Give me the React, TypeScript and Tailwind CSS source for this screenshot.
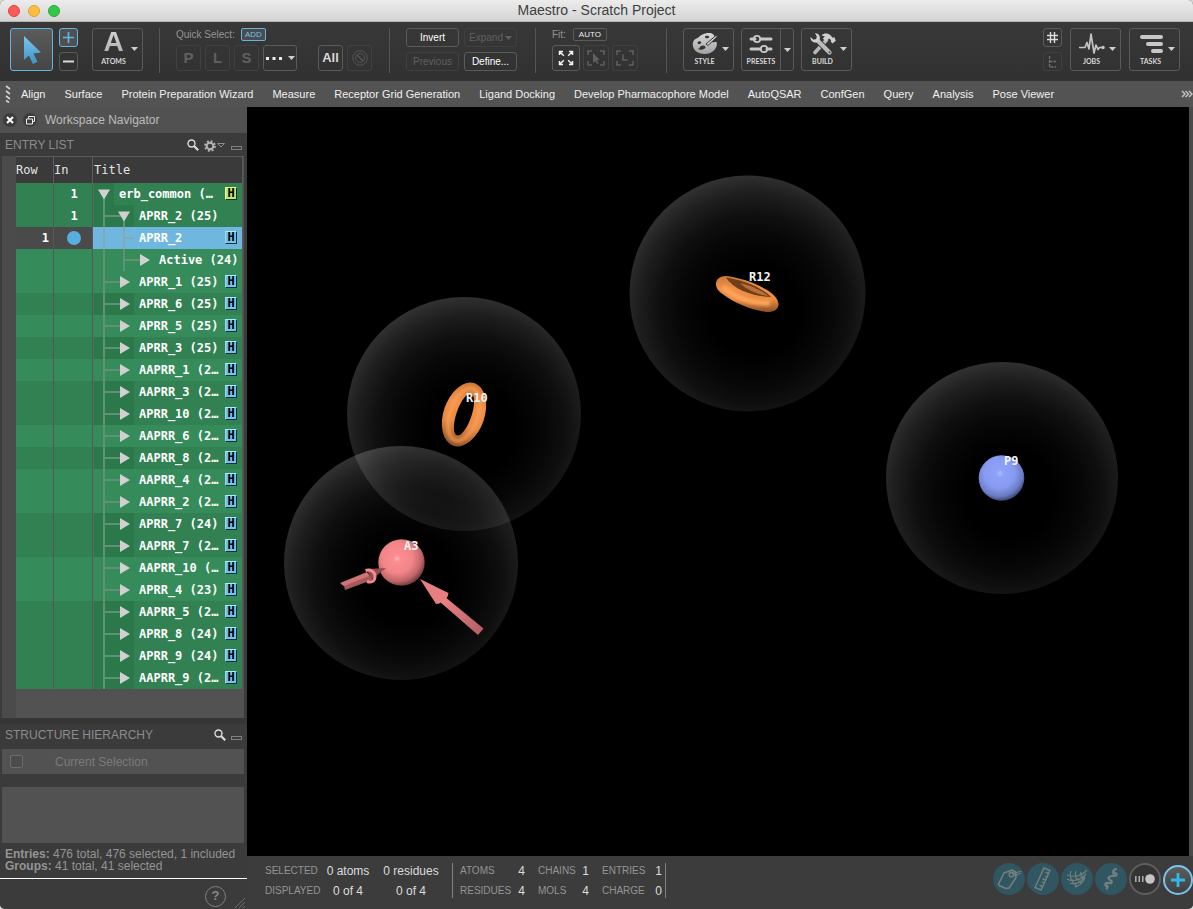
import React from "react";

const toolBtn =
  "flex shrink-0 items-center justify-center rounded-[3px] border border-[#5a5a5a] text-[#d8d8d8]";
const dimBtn =
  "flex shrink-0 items-center justify-center rounded-[3px] border border-[#404040] text-[#606060]";

function Caret({ dim = false }: { dim?: boolean }) {
  return (
    <svg width="7" height="4" viewBox="0 0 7 4" className="shrink-0" aria-hidden="true">
      <path d="M0 0h7L3.5 4z" fill={dim ? "#606060" : "#cfcfcf"} />
    </svg>
  );
}

function Divider() {
  return <div className="h-[45px] w-px shrink-0 bg-[#555]" />;
}

function BigButton({ label, children }: { label: string; children: React.ReactNode }) {
  return (
    <button className={`${toolBtn} relative h-[43px] w-[51px] pr-2 pb-1`}>
      <span className="flex flex-col items-center">
        <span className="flex h-[26px] items-center">{children}</span>
        <span className="font-['Lato'] text-[7px] leading-[8px] font-bold">{label}</span>
      </span>
      <span className="absolute top-[18px] right-1 flex">
        <Caret />
      </span>
    </button>
  );
}

const metal = (
  <linearGradient id="metal" x1="0" y1="0" x2="0" y2="1">
    <stop offset="0" stopColor="#d8d8d8" />
    <stop offset="1" stopColor="#a2a2a2" />
  </linearGradient>
);

function Toolbar() {
  return (
    <header className="flex h-[59px] shrink-0 items-start gap-4 bg-linear-to-b from-[#383838] to-[#313131] pt-[6px] pr-[13px] pl-[10px]">
      <div className="flex shrink-0">
        <button
          aria-label="Select"
          className="flex h-[43px] w-[43px] items-center justify-center rounded-[3px] border border-[#62b5e2] bg-linear-to-b from-[#5c5c5c] to-[#454545]"
        >
          <svg width="20" height="30" viewBox="0 0 20 30">
            <defs>
              <linearGradient id="cursor" x1="0" y1="0" x2="0" y2="1">
                <stop offset="0" stopColor="#7cc6f0" />
                <stop offset="1" stopColor="#3f93c4" />
              </linearGradient>
            </defs>
            <path d="M2 1 19 17.500 11.500 18.500 15.500 27 10.800 29 7 20.500 2 25z" fill="url(#cursor)" />
          </svg>
        </button>
        <div className="ml-[6px] flex flex-col gap-[5px]">
          <button
            aria-label="Add to selection"
            className="flex h-[19px] w-[19px] items-center justify-center rounded-[3px] border border-[#62b5e2] bg-[#505050]"
          >
            <svg width="11" height="11" viewBox="0 0 11 11">
              <path d="M5.500 0v11M0 5.500h11" stroke="#62b5e2" strokeWidth="1.700" />
            </svg>
          </button>
          <button aria-label="Remove from selection" className={`${toolBtn} h-[19px] w-[19px]`}>
            <svg width="11" height="3" viewBox="0 0 11 3">
              <path d="M0 1.500h11" stroke="#d8d8d8" strokeWidth="2.200" />
            </svg>
          </button>
        </div>
        <div className="ml-[14px]">
          <BigButton label="ATOMS">
            <span className="mb-[3px] bg-linear-to-b from-[#d4d4d4] to-[#b0b0b0] bg-clip-text text-[28px] leading-[26px] font-bold text-transparent">
              A
            </span>
          </BigButton>
        </div>
      </div>
      <Divider />
      <div className="mr-px flex shrink-0 gap-[21px]">
        <div className="flex flex-col gap-1">
          <div className="flex h-[13px] items-center gap-[6px]">
            <span className="text-[10px] leading-[13px] text-[#949494]">Quick Select:</span>
            <button className="h-[13px] rounded-[2px] border border-[#62b5e2] bg-[#4c4c4c] px-[3px] text-[8px] leading-[11px] text-[#6cc0ee]">
              ADD
            </button>
          </div>
          <div className="flex gap-1">
            <button className={`${dimBtn} h-[26px] w-[25px] text-[15px] font-bold`}>P</button>
            <button className={`${dimBtn} h-[26px] w-[25px] text-[15px] font-bold`}>L</button>
            <button className={`${dimBtn} h-[26px] w-[25px] text-[15px] font-bold`}>S</button>
            <button aria-label="More selections" className={`${toolBtn} h-[26px] w-[34px] gap-[6px]`}>
              <svg width="16" height="3" viewBox="0 0 16 3">
                <path d="M0 0h3v3H0zM6.500 0h3v3h-3zM13 0h3v3h-3z" fill="#eee" />
              </svg>
              <Caret />
            </button>
          </div>
        </div>
        <div className="flex gap-1 pt-[17px]">
          <button className={`${toolBtn} h-[26px] w-[25px] text-[13px] font-bold`}>All</button>
          <button aria-label="Clear selection" className={`${dimBtn} h-[26px] w-[25px]`}>
            <svg width="16" height="16" viewBox="0 0 16 16" fill="none" stroke="#555">
              <circle cx="8" cy="8" r="7.300" />
              <circle cx="8" cy="8" r="4.500" />
              <path d="m5 5 6 6" strokeWidth="1.500" />
            </svg>
          </button>
        </div>
      </div>
      <Divider />
      <div className="mr-[2px] grid shrink-0 grid-cols-[53px_53px] gap-x-[5px] gap-y-[5px] text-[10px]">
        <button className={`${toolBtn} h-[19px] text-white`}>Invert</button>
        <button className={`${dimBtn} h-[19px] gap-[2px]`}>
          Expand
          <Caret dim />
        </button>
        <button className={`${dimBtn} h-[19px]`}>Previous</button>
        <button className={`${toolBtn} h-[19px] text-white`}>Define...</button>
      </div>
      <Divider />
      <div className="mr-3 flex shrink-0 flex-col gap-1">
        <div className="flex h-[13px] items-center gap-[7px]">
          <span className="text-[10px] leading-[13px] text-[#949494]">Fit:</span>
          <button className="h-[13px] w-[34px] rounded-[2px] border border-[#5a5a5a] text-[8px] leading-[11px] text-[#eee]">
            AUTO
          </button>
        </div>
        <div className="flex gap-[3px]">
          <button aria-label="Fit all" className={`${toolBtn} h-[26px] w-[28px]`}>
            <svg width="16" height="16" viewBox="0 0 16 16" fill="none" stroke="#f2f2f2" strokeWidth="1.500">
              <path d="M1.500 5V1.500H5M1.500 1.500l4.300 4.300M11 1.500h3.500V5M14.500 1.500l-4.300 4.300M1.500 11v3.500H5M1.500 14.500l4.300-4.300M14.500 11v3.500H11M14.500 14.500l-4.300-4.300" />
            </svg>
          </button>
          <button aria-label="Fit selected" className={`${dimBtn} h-[26px] w-[26px]`}>
            <svg width="18" height="16" viewBox="0 0 18 16" fill="none" stroke="#606060" strokeWidth="1.500">
              <path d="M1 5V1h4M13 1h4v4M1 11v4h4M17 11v4h-4" />
              <path d="m6 3 7 7H9.800l1.800 3.200-1.600.8L8.300 11 6 12.800z" fill="#606060" stroke="none" />
            </svg>
          </button>
          <button aria-label="Fit ligand" className={`${dimBtn} h-[26px] w-[26px]`}>
            <svg width="18" height="16" viewBox="0 0 18 16" fill="none" stroke="#606060" strokeWidth="1.500">
              <path d="M1 5V1h4M13 1h4v4M1 11v4h4M17 11v4h-4M7 4.500V10h4.500" />
            </svg>
          </button>
        </div>
      </div>
      <Divider />
      <div className="flex shrink-0 gap-[7px]">
        <BigButton label="STYLE">
          <svg width="26" height="24" viewBox="0 0 26 24">
            <defs>{metal}</defs>
            <path
              fillRule="evenodd"
              d="M13.500 1.500C19 .2 22.800 2 22.300 5.200 21.800 7.200 19 8 18.500 10c1.500 1 5-1 6.300.5 1 5-3.800 11.500-12.300 11.500C6 22 1 18.500.8 12.500.7 10.300 1.500 8 4 6.800 6.500 6.200 7 4.500 9 3.300 10.300 2.300 11.800 1.900 13.500 1.500zM14 3.800c-1 .3-1.300 1.500-.5 2.200 1.100.8 3.500.2 3.700-1 .1-1.200-1.800-1.600-3.200-1.200zM7 9.200c-1.300.2-1.900 1.800-1 2.600 1.200 1 3.400-.1 3.200-1.500-.1-.9-1.200-1.300-2.200-1.100zM10.500 13.500c-2.500.4-2.500 2.600-4.500 3.500 2.300 1.300 6.300.7 7.400-1.300.6-1.300-1-2.500-2.900-2.200z"
              fill="url(#metal)"
            />
            <path d="m25.500 4.500-9.500 9-2-1.500L24 3.500z" fill="#d4d4d4" stroke="#353535" strokeWidth="1" />
          </svg>
        </BigButton>
        <div className="flex h-[43px] w-[53px] overflow-hidden rounded-[3px] border border-[#5a5a5a] text-[#d8d8d8]">
          <button className="flex flex-1 flex-col items-center justify-center border-r border-[#5a5a5a] pb-1">
            <svg width="24" height="26" viewBox="0 0 24 26" fill="none" stroke="#c8c8c8">
              <path d="M2 8h4M12 8h10M2 18h9M18 18h4" strokeWidth="3" strokeLinecap="round" />
              <circle cx="8" cy="8" r="3.200" strokeWidth="1.800" />
              <circle cx="15" cy="18" r="3.200" strokeWidth="1.800" />
            </svg>
            <span className="font-['Lato'] text-[7px] leading-[8px] font-bold">PRESETS</span>
          </button>
          <button aria-label="Preset options" className="flex w-3 items-center justify-center">
            <Caret />
          </button>
        </div>
        <BigButton label="BUILD">
          <svg width="26" height="24" viewBox="0 0 26 24">
            <path d="M16.500 8 5 20.500" stroke="#b8b8b8" strokeWidth="3.600" strokeLinecap="round" />
            <path d="M11.500 3.200C14 .8 18 .8 20.500 3.200l2.200 2.600 1.700-.6 1.400 3.600-3.400 2.600-1.600-1.800.2-1.500-2-1.700-3.200 3-3-2.800 2-2.200z" fill="#cfcfcf" />
            <path d="M7.500 8.500 19.500 20.500" stroke="#353535" strokeWidth="6" />
            <path d="M8 9 19.500 20.500" stroke="#bcbcbc" strokeWidth="4.200" strokeLinecap="round" />
            <path d="M5 1.200C8.500.8 10.800 4 9.600 8L7 10.500C3.500 11.200.2 8.800.4 5l3.200 2.700L6.200 7l.6-2.600z" fill="#cfcfcf" />
            <circle cx="19.500" cy="20.300" r="1" fill="#4a4a4a" />
          </svg>
        </BigButton>
      </div>
      <div className="ml-auto flex shrink-0 gap-2">
        <div className="flex flex-col gap-[5px]">
          <button aria-label="Grid" className={`${toolBtn} h-[19px] w-[19px]`}>
            <svg width="11" height="11" viewBox="0 0 11 11">
              <path d="M3.500 0v11M7.500 0v11M0 3.500h11M0 7.500h11" stroke="#dcdcdc" strokeWidth="1.400" />
            </svg>
          </button>
          <button aria-label="Tree" className={`${dimBtn} h-[19px] w-[19px]`}>
            <svg width="9" height="12" viewBox="0 0 9 12" fill="none" stroke="#707070" strokeWidth="1.400">
              <path d="M1.500 0v11H8M1.500 5.500H8" strokeDasharray="3 1" />
            </svg>
          </button>
        </div>
        <BigButton label="JOBS">
          <svg width="26" height="22" viewBox="0 0 26 22" fill="none" stroke="#c4c4c4" strokeWidth="1.700">
            <path d="M0 14.500h6L8 9.500l2 6.500L12 1l3 19 2-8 2 4.500 1.500-2H24" strokeLinejoin="round" />
            <circle cx="24" cy="14.500" r=".9" fill="#c4c4c4" />
          </svg>
        </BigButton>
        <BigButton label="TASKS">
          <svg width="24" height="20" viewBox="0 0 24 20" stroke="#c8c8c8" strokeWidth="4" strokeLinecap="round">
            <path d="M3 3h19M9 10h13M14 17h8" />
          </svg>
        </BigButton>
      </div>
    </header>
  );
}

const favorites = [
  "Align",
  "Surface",
  "Protein Preparation Wizard",
  "Measure",
  "Receptor Grid Generation",
  "Ligand Docking",
  "Develop Pharmacophore Model",
  "AutoQSAR",
  "ConfGen",
  "Query",
  "Analysis",
  "Pose Viewer",
];

function FavoritesBar() {
  return (
    <nav className="flex h-[26px] shrink-0 items-center bg-[#535353] pl-[5px]">
      <svg width="7" height="18" viewBox="0 0 7 18" className="mr-[9px] shrink-0">
        <path d="m1 1 4 3M1 6l4 3M1 11l4 3M1 15.500l3 2" stroke="#d4d4d4" strokeWidth="1.600" />
      </svg>
      <div className="flex gap-[19px] text-[11px] leading-[13px] whitespace-nowrap text-[#f0f0f0]">
        {favorites.map((f) => (
          <a key={f} href="#">
            {f}
          </a>
        ))}
      </div>
      <button aria-label="More favorites" className="ml-auto">
        <svg width="12" height="8" viewBox="0 0 12 8" fill="none" stroke="#c0c0c0" strokeWidth="1.500">
          <path d="m1 1 3 3-3 3M4.500 1l3 3-3 3M8 1l3 3-3 3" />
        </svg>
      </button>
    </nav>
  );
}

type Entry = {
  title: string;
  level: number;
  dark?: boolean;
  inCount?: string;
  row?: string;
  selected?: boolean;
  open?: boolean;
  flag?: "lime" | "blue";
};

const entries: Entry[] = [
  { title: "erb_common (…", level: 0, dark: true, inCount: "1", open: true, flag: "lime" },
  { title: "APRR_2 (25)", level: 1, dark: true, inCount: "1", open: true },
  { title: "APRR_2", level: 1, row: "1", selected: true, flag: "blue" },
  { title: "Active (24)", level: 2 },
  { title: "APRR_1 (25)", level: 1, flag: "blue" },
  { title: "APRR_6 (25)", level: 1, dark: true, flag: "blue" },
  { title: "APRR_5 (25)", level: 1, flag: "blue" },
  { title: "APRR_3 (25)", level: 1, dark: true, flag: "blue" },
  { title: "AAPRR_1 (2…", level: 1, flag: "blue" },
  { title: "AAPRR_3 (2…", level: 1, dark: true, flag: "blue" },
  { title: "APRR_10 (2…", level: 1, dark: true, flag: "blue" },
  { title: "AAPRR_6 (2…", level: 1, flag: "blue" },
  { title: "AAPRR_8 (2…", level: 1, dark: true, flag: "blue" },
  { title: "AAPRR_4 (2…", level: 1, flag: "blue" },
  { title: "AAPRR_2 (2…", level: 1, flag: "blue" },
  { title: "APRR_7 (24)", level: 1, dark: true, flag: "blue" },
  { title: "AAPRR_7 (2…", level: 1, dark: true, flag: "blue" },
  { title: "AAPRR_10 (…", level: 1, flag: "blue" },
  { title: "APRR_4 (23)", level: 1, flag: "blue" },
  { title: "AAPRR_5 (2…", level: 1, dark: true, flag: "blue" },
  { title: "APRR_8 (24)", level: 1, dark: true, flag: "blue" },
  { title: "APRR_9 (24)", level: 1, dark: true, flag: "blue" },
  { title: "AAPRR_9 (2…", level: 1, dark: true, flag: "blue" },
];

function TreeLines({ entry }: { entry: Entry }) {
  const width = 20 * (entry.level + 1);
  const x = 20 * entry.level;
  const line = entry.selected ? "#86a7b4" : "#5f9174";
  return (
    <svg
      width={width}
      height="22"
      viewBox={`0 0 ${width} 22`}
      className={entry.dark ? "shrink-0 bg-[#2b784b]" : "shrink-0"}
      aria-hidden="true"
    >
      <g stroke={line} strokeWidth="2">
        {entry.level === 0 && <path d="M10 11v11" />}
        {entry.level > 0 && <path d="M10 0v22" />}
        {entry.level === 1 && !entry.selected && <path d="M10 11h18" />}
        {entry.level === 1 && entry.open && <path d="M30 11v11" />}
        {entry.selected && <path d="M30 0v22M30 11h10" />}
        {entry.level === 2 && <path d="M30 0v22M30 11h18" />}
      </g>
      {!entry.selected &&
        (entry.open ? (
          <path d={`M${x + 4} 6.500h12l-6 10z`} fill="#d0d0d0" />
        ) : (
          <path d={`M${x + 6} 5v12l10-6z`} fill="#d0d0d0" />
        ))}
    </svg>
  );
}

function Flag({ kind }: { kind: "lime" | "blue" }) {
  return (
    <span
      className={`mb-px flex h-[13px] w-3 items-center justify-center border border-r-[#16303c] border-b-[#16303c] font-['DejaVu_Sans_Mono',monospace] text-[12px] leading-[11px] font-bold text-black ${
        kind === "lime" ? "border-t-[#e4ff9c] border-l-[#e4ff9c] bg-[#bfe86a]" : "border-t-[#a4f0f8] border-l-[#90d8f4] bg-[#76c2ec]"
      }`}
    >
      H
    </span>
  );
}

function EntryTable() {
  return (
    <table className="w-full table-fixed border-separate border-spacing-0 font-['DejaVu_Sans_Mono',monospace] text-[12px] leading-[22px]">
      <colgroup>
        <col className="w-[38px]" />
        <col className="w-[39px]" />
        <col />
      </colgroup>
      <thead>
        <tr className="h-[27px] bg-[#3a3a3a] text-left text-[#e4e4e4]">
          <th className="border-t border-r border-[#5c5c5c] p-0 font-normal">Row</th>
          <th className="border-t border-r border-[#5c5c5c] p-0 font-normal">In</th>
          <th className="border-t border-r border-[#5c5c5c] p-0 pl-px font-normal">Title</th>
        </tr>
      </thead>
      <tbody className="font-bold text-white">
        {entries.map((e, i) => {
          const bg = e.dark ? "bg-[#318153]" : "bg-[#358b5a]";
          const side = e.selected ? "bg-[#4a4a4a]" : bg;
          return (
            <tr key={i} className="h-[22px]">
              <td className={`border-r border-[#575757] p-0 pr-1 text-right ${side}`}>{e.row}</td>
              <td className={`border-r border-[#575757] p-0 pl-[2px] text-center ${side}`}>
                {e.selected ? (
                  <span className="mx-auto block h-[14px] w-[14px] rounded-full bg-[#5aaede]" />
                ) : (
                  e.inCount
                )}
              </td>
              <td className={`border-r border-[#575757] p-0 pl-px ${e.selected ? "bg-[#70b7df]" : bg}`}>
                <div className="flex h-[22px] items-center pr-[5px]">
                  <TreeLines entry={e} />
                  <span className="pt-px pl-[5px] leading-[21px] whitespace-nowrap">{e.title}</span>
                  {e.flag && (
                    <span className="ml-auto">
                      <Flag kind={e.flag} />
                    </span>
                  )}
                </div>
              </td>
            </tr>
          );
        })}
      </tbody>
    </table>
  );
}

function SearchIcon() {
  return (
    <svg width="12" height="12" viewBox="0 0 12 12" fill="none" stroke="#dedede">
      <circle cx="4.500" cy="4.500" r="3.500" strokeWidth="1.400" />
      <path d="m7.200 7.200 4 4" strokeWidth="2.200" />
    </svg>
  );
}

function MinimizeIcon() {
  return <span className="block h-1 w-[11px] border border-[#808080]" />;
}

function Sidebar() {
  return (
    <aside className="flex w-[247px] shrink-0 flex-col bg-[#3b3b3b]">
      <div className="flex h-[26px] items-center bg-[#515151] pl-[3px]">
        <button aria-label="Close" className="flex h-[14px] w-[14px] items-center justify-center rounded-full bg-[#3c3c3c]">
          <svg width="8" height="8" viewBox="0 0 8 8">
            <path d="m1 1 6 6M7 1 1 7" stroke="#fff" strokeWidth="2" />
          </svg>
        </button>
        <button aria-label="Float" className="ml-[6px] flex h-[14px] w-[14px] items-center justify-center rounded-full bg-[#3c3c3c]">
          <svg width="9" height="9" viewBox="0 0 9 9" fill="none" stroke="#eee">
            <path d="M2.500 2.500v-2h6v5h-2M.5 3h6v5h-6z" />
          </svg>
        </button>
        <h1 className="ml-2 text-[12px] text-[#bcbcbc]">Workspace Navigator</h1>
      </div>
      <div className="flex h-[23px] items-center pr-[5px] pl-[5px]">
        <h2 className="text-[12px] text-[#8c8c8c]">ENTRY LIST</h2>
        <button aria-label="Search entries" className="ml-auto">
          <SearchIcon />
        </button>
        <button aria-label="Entry list settings" className="ml-[5px] flex items-center gap-px pt-[2px]">
          <svg width="12" height="12" viewBox="0 0 12 12" fill="none" stroke="#b4b4b4">
            <circle cx="6" cy="6" r="3.300" strokeWidth="2" />
            <circle cx="6" cy="6" r="5" strokeWidth="1.700" strokeDasharray="2 1.927" />
          </svg>
          <svg width="8" height="5" viewBox="0 0 8 5" fill="none" stroke="#8c8c8c">
            <path d="M.5.5h7L4 4z" />
          </svg>
        </button>
        <button aria-label="Minimize entry list" className="ml-[6px] pt-[7px]">
          <MinimizeIcon />
        </button>
      </div>
      <div className="mr-[3px] ml-[2px] h-[562px] bg-[#4b4b4b] pl-[14px]">
        <div className="h-full bg-[#525252]">
          <div className="pr-px">
            <EntryTable />
          </div>
        </div>
      </div>
      <div className="flex h-[31px] items-center border-t-[6px] border-[#363636] pr-[5px] pb-[3px] pl-[5px]">
        <h2 className="text-[12px] text-[#8c8c8c]">STRUCTURE HIERARCHY</h2>
        <button aria-label="Search structure" className="ml-auto">
          <SearchIcon />
        </button>
        <button aria-label="Minimize structure hierarchy" className="ml-[5px] pt-[6px]">
          <MinimizeIcon />
        </button>
      </div>
      <label className="mr-[3px] ml-[2px] flex h-[25px] items-center bg-[#525252] pl-2 text-[12px] text-[#7a7a7a]">
        <input type="checkbox" className="h-[13px] w-[13px] appearance-none rounded-[2px] border border-[#6c6c6c] bg-[#4c4c4c]" />
        <span className="ml-8">Current Selection</span>
      </label>
      <div className="mt-[13px] mr-[3px] ml-[2px] h-14 bg-[#525252]" />
      <div className="mt-[5px] pl-[5px] text-[12px] leading-[12px] whitespace-nowrap text-[#949494]">
        <p>
          <b>Entries:</b> 476 total, 476 selected, 1 included
        </p>
        <p>
          <b>Groups:</b> 41 total, 41 selected
        </p>
      </div>
      <div className="mt-[6px] flex flex-1 items-center justify-end border-t border-white pr-px">
        <button className="mt-1 flex h-[21px] w-[21px] items-center justify-center rounded-full border border-[#808080] text-[13px] font-bold text-[#868686]">
          ?
        </button>
        <svg width="12" height="12" viewBox="0 0 12 12" className="ml-2 self-end" stroke="#6c6c6c">
          <path d="M1 11 11 1M5 11l6-6M9 11l2-2" />
        </svg>
      </div>
    </aside>
  );
}

const features = [
  { cx: 500.5, cy: 186.5, r: 118 },
  { cx: 217, cy: 307, r: 117 },
  { cx: 755, cy: 371, r: 116 },
  { cx: 154, cy: 456, r: 117 },
];

const labels = [
  { x: 502, y: 174, text: "R12" },
  { x: 219, y: 295, text: "R10" },
  { x: 757, y: 358, text: "P9" },
  { x: 157, y: 443, text: "A3" },
];

function Scene() {
  return (
    <main className="flex min-h-0 flex-1 border-r-4 border-[#4a4a4a] bg-black">
      <svg viewBox="0 0 942 749" className="w-full" role="img" aria-label="Pharmacophore hypothesis">
        <defs>
          <radialGradient id="shell" cx=".53" cy=".57" r=".62">
            <stop offset=".3" stopColor="#fff" stopOpacity="0" />
            <stop offset=".5" stopColor="#fff" stopOpacity=".025" />
            <stop offset=".65" stopColor="#fff" stopOpacity=".06" />
            <stop offset=".8" stopColor="#fff" stopOpacity=".12" />
            <stop offset=".94" stopColor="#fff" stopOpacity=".2" />
          </radialGradient>
          <radialGradient id="pink" cx=".42" cy=".38" r=".66" fx=".4" fy=".42">
            <stop offset="0" stopColor="#ffb4b4" />
            <stop offset=".12" stopColor="#fb8d90" />
            <stop offset=".5" stopColor="#f28588" />
            <stop offset=".78" stopColor="#c0666a" />
            <stop offset="1" stopColor="#5e3032" />
          </radialGradient>
          <radialGradient id="blue" cx=".44" cy=".38" r=".66" fx=".47" fy=".4">
            <stop offset="0" stopColor="#b0bcff" />
            <stop offset=".12" stopColor="#8fa2fb" />
            <stop offset=".5" stopColor="#889bf2" />
            <stop offset=".78" stopColor="#6a7cc2" />
            <stop offset="1" stopColor="#2c3458" />
          </radialGradient>
          <linearGradient id="arrow" x1="0" y1="0" x2="1" y2="1">
            <stop offset="0" stopColor="#f08488" />
            <stop offset="1" stopColor="#b05e62" />
          </linearGradient>
          <linearGradient id="ring" x1="0" y1="0" x2="0" y2="1">
            <stop offset="0" stopColor="#cc7834" />
            <stop offset=".35" stopColor="#f29048" />
            <stop offset=".65" stopColor="#e88a42" />
            <stop offset="1" stopColor="#8c5024" />
          </linearGradient>
          <filter id="soft" x="-30%" y="-30%" width="160%" height="160%">
            <feGaussianBlur stdDeviation="1.500" />
          </filter>
        </defs>

        {features.map((f) => (
          <circle key={f.cx} cx={f.cx} cy={f.cy} r={f.r} fill="url(#shell)" />
        ))}

        <g transform="translate(469 169)">
          <path
            d="M0 8C0 3 4 0 10 0 22 1 40 7 51 14 58 18 63 24 62.500 29 62 34 57 36.500 50 36 36 34 18 27 8 19 2 15 0 12 0 8z"
            fill="url(#ring)"
          />
          <path d="M10 1.500C26 4 46 11 55 21 41 21 18 15 10 1.500z" fill="#6f3f1c" />
          <path d="M24 7C36 10 47 15 52 20 42 18.500 31 14 24 7z" fill="#b87036" />
          <path d="M7 11C17 21 36 28 54 27" fill="none" stroke="#ffa65c" strokeWidth="5" filter="url(#soft)" />
        </g>

        <g transform="translate(217 307.500) rotate(19)">
          <path
            fillRule="evenodd"
            d="M-20.500 0a20.500 33 0 1 0 41 0a20.500 33 0 1 0-41 0M-7.500 0a7.500 22 0 1 0 15 0a7.500 22 0 1 0-15 0"
            fill="url(#ring)"
          />
          <ellipse rx="14" ry="27.500" fill="none" stroke="#ffa45c" strokeWidth="3" strokeOpacity=".8" filter="url(#soft)" />
        </g>

        <circle cx="754.500" cy="371" r="22.800" fill="url(#blue)" />

        <circle cx="154.500" cy="455.500" r="23.200" fill="url(#pink)" />
        <path d="m120 462 19-1-15 12z" fill="#904c4f" />
        <path d="m94 477 27-11 4 7-27 10-1-4z" fill="#a6585b" />
        <path d="m93 476 27-11 2 4-25 10z" fill="#cf7477" />
        <path d="M118.500 463.500C124 462 128 465 128 469.500S124.500 476 120 474.500" fill="none" stroke="#f48a8d" strokeWidth="3" />
        <path d="m197 489 39.500 32.500-5.500 6.500-38-33z" fill="url(#arrow)" />
        <path d="m173 472 28.500 14-1 4-8 6.500-3.500.5z" fill="#e67e82" />

        <g fill="#f4f4f4" fontFamily="DejaVu Sans Mono, monospace" fontSize="12" fontWeight="700">
          {labels.map((l) => (
            <text key={l.text} x={l.x} y={l.y}>
              {l.text}
            </text>
          ))}
        </g>
      </svg>
    </main>
  );
}

function StatusBar() {
  return (
    <footer className="flex h-[53px] shrink-0 items-start bg-[#3c3c3c] pl-[18px]">
      <div className="mt-[5px] grid shrink-0 grid-cols-[56px_50px_6px_56px] gap-x-[2px] text-[10px] leading-5 whitespace-nowrap text-[#949494]">
        <span>SELECTED</span>
        <span className="text-center text-[12px] text-[#dcdcdc]">0 atoms</span>
        <span />
        <span className="text-center text-[12px] text-[#dcdcdc]">0 residues</span>
        <span>DISPLAYED</span>
        <span className="text-center text-[12px] text-[#dcdcdc]">0 of 4</span>
        <span />
        <span className="text-center text-[12px] text-[#dcdcdc]">0 of 4</span>
      </div>
      <div className="mt-[7px] ml-[13px] flex h-[35px] shrink-0 items-center border-x border-[#808080] pr-[3px] pl-[7px]">
        <div className="grid grid-cols-[57px_8px_56px_8px_65px_8px] text-[10px] leading-5 whitespace-nowrap text-[#949494]">
          {[
            ["ATOMS", "4", "CHAINS", "1", "ENTRIES", "1"],
            ["RESIDUES", "4", "MOLS", "4", "CHARGE", "0"],
          ]
            .flat()
            .map((t, i) => (
              <span
                key={i}
                className={i % 2 ? "text-right text-[12px] text-[#dcdcdc]" : i % 6 === 0 ? "" : "pl-[13px]"}
              >
                {t}
              </span>
            ))}
        </div>
      </div>
      <div className="mt-[7px] ml-auto flex shrink-0 gap-[2px]">
        <button aria-label="Labels" className="flex h-8 w-8 items-center justify-center rounded-full bg-[#305661]">
          <svg width="26" height="24" viewBox="0 0 26 24" fill="none" stroke="#71807f" strokeWidth="1.600">
            <path d="M2.500 17 8 6l8-3 3.500 2 .5 5.500L13 21l-3 .5-7-3z" strokeLinejoin="round" />
            <circle cx="15.500" cy="7.500" r="2.300" />
            <path d="M15.500 6.500c3 1 5-2 10-2M18 8c3 1 4-1 7-2" strokeWidth="1.200" />
          </svg>
        </button>
        <button aria-label="Measurements" className="flex h-8 w-8 items-center justify-center rounded-full bg-[#305661]">
          <svg width="20" height="24" viewBox="0 0 20 24" fill="none" stroke="#71807f" strokeWidth="1.500">
            <path d="m11 1 6 2.500L8 23l-6-2.500zM12.500 13l-3-1.300M14 10l-2-.9M15.500 6.500l-3-1.300M11 16l-2-.9M9.500 19.500l-3-1.300" />
          </svg>
        </button>
        <button aria-label="Surfaces" className="flex h-8 w-8 items-center justify-center rounded-full bg-[#305661]">
          <svg width="24" height="22" viewBox="0 0 24 22" fill="none" stroke="#71807f" strokeWidth="1.200">
            <path d="M2 7c6 2 14 2 20-5M2 11c5 3 14 1 19-5M5 15c5 2 11 0 15-7M10 19c4-1 8-5 10-9M6 3c-2 4 0 10 6 16M11 3c-2 5 0 8 5 12M16 4c-1 3 0 5 3 8" />
          </svg>
        </button>
        <button aria-label="Ribbons" className="flex h-8 w-8 items-center justify-center rounded-full bg-[#305661]">
          <svg width="18" height="24" viewBox="0 0 18 24" fill="none" stroke="#71807f" strokeWidth="2.200">
            <path d="M15 2c-4 0-5 3-2 4s2 3-2 3-6 2-3 4 2 4-1 3-5 2-3 3 2 2 0 3" />
            <path d="M11 5c-2 3 4 3 3 5M7 10c-2 2 4 3 3 6M4 15c-2 2 3 3 2 5" strokeWidth="1.300" />
          </svg>
        </button>
        <button aria-label="Toggle representation" className="flex h-8 w-8 items-center justify-center rounded-full border-2 border-[#5e5e5e] bg-[#343434]">
          <svg width="20" height="12" viewBox="0 0 20 12">
            <path d="M.800 3v6M4.300 3v6M7.800 3v6" stroke="#b0b0b0" strokeWidth="1.500" />
            <circle cx="15" cy="6" r="4.800" fill="#c4c4c4" />
          </svg>
        </button>
        <button aria-label="Add" className="mt-[2px] flex h-[30px] w-[30px] items-center justify-center rounded-full border-2 border-[#78c4ee] bg-linear-to-b from-[#5c5c5c] to-[#404040]">
          <svg width="14" height="14" viewBox="0 0 14 14">
            <path d="M7 0v14M0 7h14" stroke="#30b8e6" strokeWidth="2.800" />
          </svg>
        </button>
      </div>
    </footer>
  );
}

export default function App() {
  return (
    <div className="bg-[#d8d8d8]">
      <div className="flex min-h-screen flex-col overflow-hidden rounded-[5px] bg-[#3b3b3b] font-['Liberation_Sans',Arial,sans-serif]">
        <div className="relative flex h-[22px] shrink-0 items-center justify-center border-b border-[#b4b4b4] bg-linear-to-b from-[#ececec] to-[#d4d4d4] text-[14px] text-[#404040]">
          <div className="absolute left-2 flex gap-2">
            <button aria-label="Close window" className="h-3 w-3 rounded-full border border-[#e0443e] bg-[#fc5b57]" />
            <button aria-label="Minimize window" className="h-3 w-3 rounded-full border border-[#dea034] bg-[#fdbd41]" />
            <button aria-label="Zoom window" className="h-3 w-3 rounded-full border border-[#27aa35] bg-[#34c84a]" />
          </div>
          Maestro - Scratch Project
        </div>
        <Toolbar />
        <FavoritesBar />
        <div className="flex flex-1">
          <Sidebar />
          <div className="flex min-w-0 flex-1 flex-col">
            <Scene />
            <StatusBar />
          </div>
        </div>
      </div>
    </div>
  );
}
